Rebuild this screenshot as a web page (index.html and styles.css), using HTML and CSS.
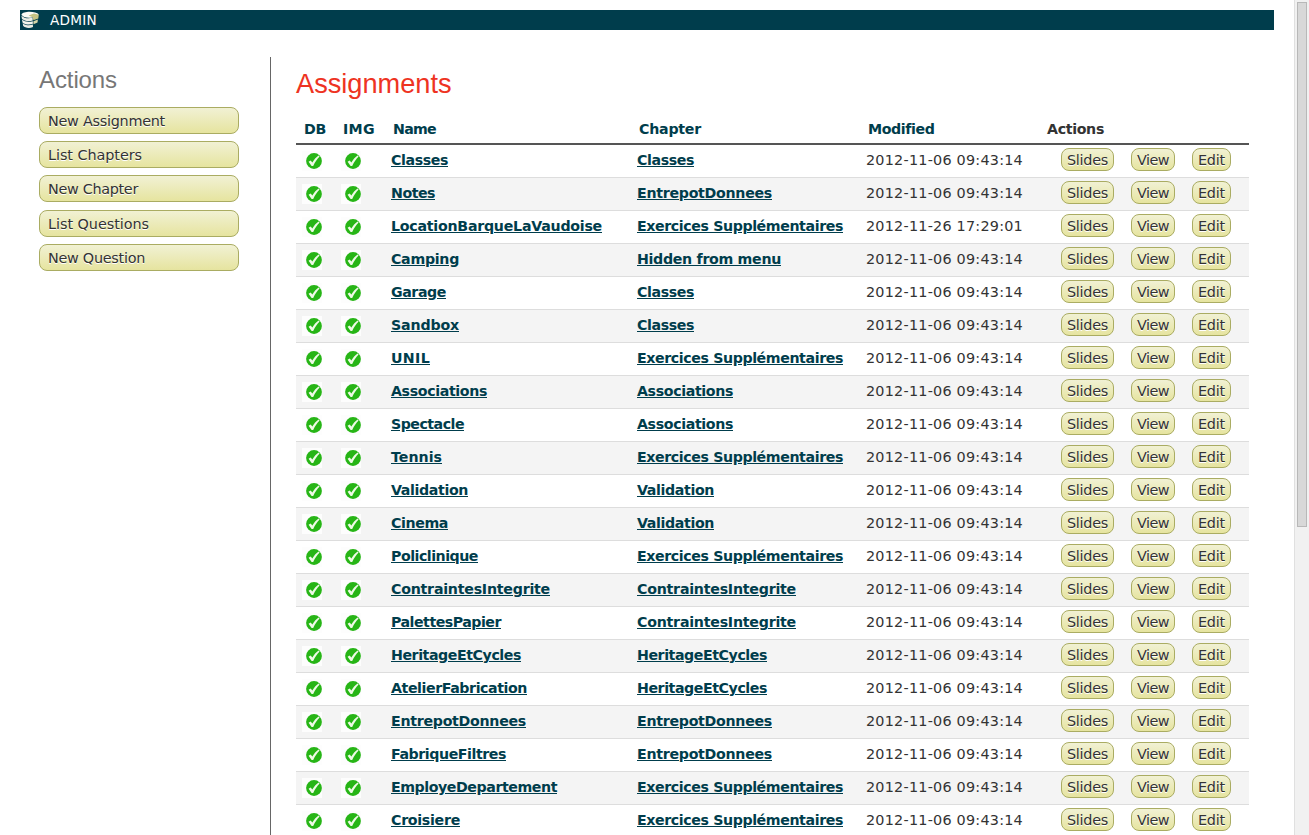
FILE: index.html
```
<!DOCTYPE html>
<html lang="en">
<head>
<meta charset="utf-8">
<title>Assignments</title>
<link rel="stylesheet" href="styles.css">
</head>
<body>
<svg class="defs" aria-hidden="true">
  <symbol id="ok" viewBox="0 0 20 20">
    <rect width="20" height="20" fill="#fdfdfd"/>
    <circle cx="12" cy="10" r="7.9" fill="#27b516"/>
    <path d="M6.6 10.8 L8.6 9.4 L10.4 11.4 C12 8.6 14 6 16.6 4.4 L17.6 5.6 C15 8.2 13.2 11 11.2 15 L9.6 15 Z" fill="#effae6"/>
  </symbol>
</svg>
<div class="page">
  <header class="topbar">
    <svg class="logo" viewBox="0 0 20 20">
      <path d="M1.4 4.6 C3 .8 16 .8 18.8 4.6 L12 7.4 C8 8.6 3 7.4 1.4 4.6Z" fill="#fbfbf6"/>
      <path d="M1.4 5.4 C4 8.4 8.5 8.8 12.6 7.6 L12.8 10.4 C8.5 11.8 4.4 11 1.9 8.8Z" fill="#ecece4"/>
      <path d="M2 9.6 C4.6 12 8.6 12.4 12.8 11.2 L12.9 13.8 C9 15.2 5 14.6 2.5 12.4Z" fill="#f4f4ec"/>
      <path d="M2.7 13.2 C5.4 15.4 9 15.8 12.9 14.6 L13 17 C9.5 18.8 4.8 18 3.1 15.8Z" fill="#ecece4"/>
      <path d="M8.6 5.4 L14 3.6 L18.8 4.8 L18.3 8.6 L13.4 10.2 L12.6 7.2Z" fill="#c5c384"/>
      <path d="M13.4 11.2 L17.9 9.6 L17.5 12.4 L13.5 14.2Z" fill="#d6d5a8"/>
    </svg>
    <span class="brand" data-w="47">ADMIN</span>
  </header>
  <div class="body">
    <nav class="side">
      <h3>Actions</h3>
      <a class="btn wide"><span data-w="117">New Assignment</span></a>
      <a class="btn wide"><span data-w="94">List Chapters</span></a>
      <a class="btn wide"><span data-w="90">New Chapter</span></a>
      <a class="btn wide lower"><span data-w="101">List Questions</span></a>
      <a class="btn wide"><span data-w="97">New Question</span></a>
    </nav>
    <main class="main">
      <h2>Assignments</h2>
      <div class="row head">
        <div><span data-w="22">DB</span></div>
        <div><span data-w="32">IMG</span></div>
        <div><span data-w="43">Name</span></div>
        <div><span data-w="62">Chapter</span></div>
        <div><span data-w="66">Modified</span></div>
        <div class="plain"><span data-w="57">Actions</span></div>
      </div>
      <div class="rows" id="rows"></div>
    </main>
  </div>
</div>
<div class="scroll"><div class="thumb"></div></div>
<script src="rows.js"></script>
</body>
</html>
```
FILE: styles.css
```
* { box-sizing: border-box; }
html, body { height: 835px; overflow: hidden; }
body { margin: 0; display: flex; background: #fff; color: #333; font-family: Verdana, "DejaVu Sans", sans-serif; font-size: 14.4px; }
.defs { position: absolute; width: 0; height: 0; }
.page { flex: 1; padding: 10px 20px 0; height: 835px; overflow: hidden; }
.topbar { height: 20px; background: #003d4c; color: #fff; display: flex; align-items: center; }
.logo { width: 20px; height: 20px; }
.brand { margin-left: 10px; font-size: 13.6px; }
.body { display: flex; margin-top: 27px; height: 800px; }
.side { width: 251px; padding: 9px 0 0 19px; border-right: 1px solid #666; }
h2, h3 { margin: 0; font-family: "Liberation Sans", Arial, sans-serif; font-weight: normal; }
h3 { color: #777; font-size: 24px; line-height: 28px; height: 41px; letter-spacing: -0.1px; }
h2 { color: #e32; font-size: 27.2px; line-height: 32px; height: 57px; padding-top: 11px; }
.btn { display: block; border: 1px solid #aaac62; border-radius: 8px; background: linear-gradient(#f1f1d4, #e6e49f); color: #333; text-shadow: #fff 0 1px 0; white-space: nowrap; }
.wide { width: 200px; height: 27px; line-height: 26px; padding-left: 8px; margin-bottom: 7px; }
.lower { margin-top: 8px; }
.main { width: 953px; margin-left: 25px; }
.row { display: grid; grid-template-columns: 39px 54px 246px 229px 183px 202px; height: 33px; align-items: center; border-bottom: 1px solid #ddd; white-space: nowrap; }
.rows .row:nth-child(even) { background: #f4f4f4; }
.head { height: 31px; border-bottom: 2px solid #555; color: #003d4c; font-weight: bold; font-size: 14.2px; }
.head div { padding-left: 4px; }
.head div:nth-child(1), .head div:nth-child(2) { padding-left: 8px; }
.head .plain { color: #333; padding-left: 0; }
.ok { width: 20px; height: 20px; margin-left: 6px; display: block; }
.cell { padding: 0 0 2px 2px; line-height: 20px; }
.link { color: #003d4c; font-weight: bold; font-size: 14.2px; text-decoration: underline; }
.acts { display: flex; gap: 17px; padding: 0 0 3px 14px; }
.acts .btn { height: 23px; line-height: 23px; text-align: center; }
.slides { width: 53px; }
.view { width: 44px; }
.edit { width: 39px; }
.scroll { width: 15px; height: 835px; background: #f1f1f1; border-left: 1px solid #e0e0e0; padding: 2px 2px 0; }
.thumb { width: 10px; height: 525px; background: #d8d8d8; border: 1px solid #b8b8b8; }
```
FILE: rows.js
```
var ES = 'Exercices Supplémentaires';
var data = [
  ['Classes', 'Classes'], ['Notes', 'EntrepotDonnees'], ['LocationBarqueLaVaudoise', ES],
  ['Camping', 'Hidden from menu'], ['Garage', 'Classes'], ['Sandbox', 'Classes'], ['UNIL', ES],
  ['Associations', 'Associations'], ['Spectacle', 'Associations'], ['Tennis', ES],
  ['Validation', 'Validation'], ['Cinema', 'Validation'], ['Policlinique', ES],
  ['ContraintesIntegrite', 'ContraintesIntegrite'], ['PalettesPapier', 'ContraintesIntegrite'],
  ['HeritageEtCycles', 'HeritageEtCycles'], ['AtelierFabrication', 'HeritageEtCycles'],
  ['EntrepotDonnees', 'EntrepotDonnees'], ['FabriqueFiltres', 'EntrepotDonnees'],
  ['EmployeDepartement', ES], ['Croisiere', ES]
];
// Label widths in pixels; the tracking of each label is set from them.
var widths = {
  Classes: 57, Notes: 44, LocationBarqueLaVaudoise: 211, Camping: 68, Garage: 55, Sandbox: 68,
  UNIL: 39, Associations: 96, Spectacle: 73, Tennis: 51, Validation: 77, Cinema: 57,
  Policlinique: 87, ContraintesIntegrite: 159, PalettesPapier: 110, HeritageEtCycles: 130,
  AtelierFabrication: 136, EntrepotDonnees: 135, FabriqueFiltres: 115, EmployeDepartement: 166,
  Croisiere: 69, 'Hidden from menu': 144
};
widths[ES] = 206;
var icon = '<svg class="ok"><use href="#ok"/></svg>';
function link(t) {
  return '<div class="cell"><a class="link" data-w="' + widths[t] + '">' + t + '</a></div>';
}
document.getElementById('rows').innerHTML = data.map(function (r, i) {
  var date = i === 2 ? '2012-11-26 17:29:01' : '2012-11-06 09:43:14';
  return '<div class="row">' + icon + icon + link(r[0]) + link(r[1]) +
    '<div class="cell"><span data-w="157">' + date + '</span></div>' +
    '<div class="acts"><a class="btn slides"><span data-w="41">Slides</span></a><a class="btn view"><span data-w="32">View</span></a><a class="btn edit"><span data-w="27">Edit</span></a></div></div>';
}).join('');
document.querySelectorAll('[data-w]').forEach(function (el) {
  var natural = el.getBoundingClientRect().width;
  el.style.letterSpacing = (el.dataset.w - natural) / el.textContent.length + 'px';
});
```
